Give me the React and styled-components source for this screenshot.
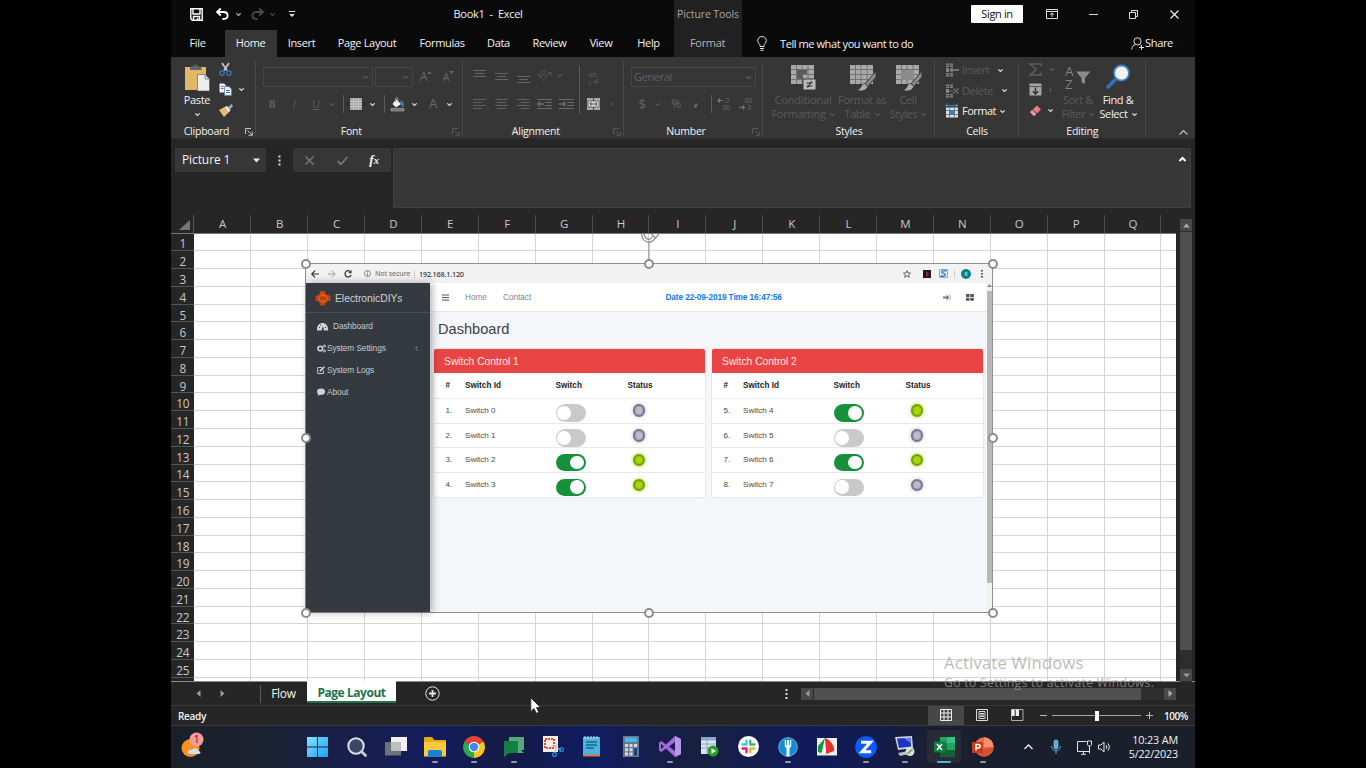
import React from 'react';
import styled, { createGlobalStyle, css } from 'styled-components';

const Global = createGlobalStyle`
  * { box-sizing: border-box; }
  html, body { margin: 0; background: #000; overflow: hidden; }
  svg { display: block; flex: none; overflow: visible; }
`;

const ui = '"Open Sans", "Noto Sans", sans-serif';
const web = '"Liberation Sans", Arial, sans-serif';
const DIM = '#5a5a5a';

const Screen = styled.div`
  width: 1366px; height: 768px; background: #000;
  display: flex; justify-content: center; overflow: hidden;
`;
const Desktop = styled.div`
  position: relative; width: 1024px; height: 768px;
  display: flex; flex-direction: column; background: #262626;
  font-family: ${ui}; font-size: 11px; color: #f2f2f2;
`;
const Slot = styled.div`
  flex: none; width: ${p => p.$w}px; display: flex; align-items: center; justify-content: ${p => p.$j || 'center'};
  white-space: nowrap;
`;
const Spacer = styled.div`flex: ${p => (p.$w ? 'none' : 1)}; width: ${p => (p.$w ? p.$w + 'px' : 'auto')};`;
const Text = styled.span`
  white-space: nowrap; font-size: ${p => p.$s || 11}px; letter-spacing: ${p => p.$ls ?? -0.36}px;
  color: ${p => p.$c || '#f2f2f2'}; font-weight: ${p => p.$b || 500}; line-height: 14px;
  ${p => p.$i && css`font-style: italic;`}
  ${p => p.$u && css`text-decoration: underline;`}
`;

/* title bar and ribbon tabs */
const TitleBar = styled.div`height: 30px; flex: none; display: flex; background: #0a0a0a; padding-bottom: 2px;`;
const TabBar = styled.div`height: 27px; flex: none; display: flex; background: #0a0a0a;`;
const ContextTitle = styled(Slot)`background: #212121; margin-bottom: -2px; padding-bottom: 2px;`;
const RibbonTab = styled(Slot)`background: ${p => p.$bg || 'transparent'}; padding: 0 1px 1px 0;`;
const TellMe = styled.span`align-self: center; white-space: nowrap; font-size: 11px; letter-spacing: -0.42px; font-weight: 500; padding-bottom: 1px;`;
const SignIn = styled.div`
  width: 52px; height: 18px; margin-top: 5px; background: #fff; border-radius: 1px;
  display: flex; align-items: center; justify-content: center;
`;

/* ribbon */
const Ribbon = styled.div`
  height: 82px; flex: none; display: flex; background: #363636; border-bottom: 1px solid #2c2c2c;
`;
const Group = styled.section`
  width: ${p => p.$w}px; flex: none; display: flex; flex-direction: column; position: relative;
  &::after { content: ''; width: 1px; height: 75px; position: absolute; right: 0; top: 4px; background: #4a4a4a; }
`;
const GroupBody = styled.div`height: 67px; display: flex;`;
const GroupLabel = styled.div`height: 15px; display: flex; align-items: center; justify-content: center; padding: 1px ${p => p.$pr || 0}px 0 0;`;
const Launcher = styled.div`position: absolute; right: 3px; bottom: 2px;`;
const Stack = styled.div`width: ${p => p.$w}px; flex: none; display: flex; flex-direction: column; padding-top: ${p => p.$pt || 0}px;`;
const Line = styled.div`height: ${p => p.$h || 20}px; flex: none; display: flex; align-items: center; padding-left: ${p => p.$pl || 0}px; margin-top: ${p => p.$mt || 0}px;`;
const Combo = styled.div`
  width: ${p => p.$w}px; height: 20px; border: 1px solid #454545; display: flex; align-items: center;
  justify-content: space-between; padding: 0 4px 0 2px; margin-right: 2px;
`;
const VRule = styled.div`width: 1px; height: ${p => p.$h || 18}px; background: #5c5c5c;`;
const BigButton = styled.div`
  width: ${p => p.$w}px; flex: none; padding-top: 7px; display: flex; flex-direction: column; align-items: center;
`;
const BigIcon = styled.div`height: 29px;`;
const BigText = styled.div`height: 14px; display: flex; align-items: center; justify-content: center; gap: 4px;`;
const Comma = styled.span`color: #666; font-size: 18px; line-height: 10px; margin-top: -10px; font-weight: 700;`;
const Raised = styled.span`margin-bottom: 9px;`;
const Collapse = styled.div`width: 24px; display: flex; align-items: flex-end; justify-content: center; padding-bottom: 3px;`;

/* formula bar */
const FormulaBar = styled.div`height: 76px; flex: none; display: flex; padding: 9px 4px 0; background: #262626;`;
const NameBox = styled.div`width: 91px; height: 24px; background: #363636; display: flex; align-items: center; justify-content: space-between; padding: 0 6px 0 7px;`;
const DotsCell = styled.div`width: 27px; height: 24px; display: flex; align-items: center; justify-content: center;`;
const FxBox = styled.div`width: 98px; height: 24px; background: #363636; display: flex; align-items: center; margin-right: 2px;`;
const FxText = styled.span`font: italic 700 13.5px "Liberation Serif", serif; small { font-size: 10.5px; }`;
const FormulaInput = styled.div`flex: 1; height: 60px; background: #373737; border: 1px solid #404040; display: flex; justify-content: flex-end; padding: 7px 4px;`;

/* worksheet */
const SheetArea = styled.div`height: 467px; flex: none; display: flex; position: relative; background: #262626; border-bottom: 1px solid #8a8a8a;`;
const Sheet = styled.div`width: 1005px; height: 466px; overflow: hidden; position: relative;`;
const HeaderRow = styled.div`display: flex; height: 18.6px; width: 1040px; border-bottom: 1px solid #777;`;
const Corner = styled.div`width: 23.3px; flex: none; display: flex; align-items: flex-end; justify-content: flex-end; padding: 0 3px 3px 0; border-right: 1px solid #555;`;
const ColHead = styled.div`
  width: 56.9px; flex: none; display: flex; align-items: center; justify-content: center; color: #c9c9c9;
  font-size: 11.5px; border-right: 1px solid #4c4c4c; padding: 1px 0 0 1px; line-height: 14px;
`;
const Row = styled.div`display: flex; height: 17.78px; width: 1040px;`;
const RowHead = styled.div`
  width: 23.3px; flex: none; background: #262626; color: #c9c9c9; font-size: 11.8px; letter-spacing: -0.3px;
  display: flex; align-items: center; justify-content: center; padding-top: 3px; border-bottom: 1px solid #555; line-height: 14px;
`;
const Cell = styled.div`width: 56.9px; flex: none; background: #fff; border-right: 1px solid #d4d4d4; border-bottom: 1px solid #d4d4d4;`;
const VScroll = styled.div`width: 12px; margin: 4px 3px 0 4px; height: 463px; display: flex; flex-direction: column; background: #2d2d2d;`;
const ScrollButton = styled.div`width: 12px; height: 12px; flex: none; background: #484848; display: flex; align-items: center; justify-content: center;`;
const VThumb = styled.div`height: 418px; margin: 1px 0 19px; background: #4f4f4f;`;

/* picture placed over the cells */
const Picture = styled.div`
  position: absolute; left: 134px; top: 48px; width: 688px; height: 350px; border: 1px solid #8e8e8e;
  background: #f4f6f9; font-family: ${web}; display: flex; flex-direction: column; color: #444;
`;
const Knob = styled.i`
  position: absolute; left: ${p => p.$x}px; top: ${p => p.$y}px; width: 10px; height: 10px; margin: -5px;
  border-radius: 50%; background: #fff; border: 2px solid #8c8c8c; z-index: 2;
`;
const RotateHandle = styled.div`position: absolute; left: 468px; top: 19px;`;
const BrowserBar = styled.div`height: 19px; flex: none; display: flex; align-items: center; background: #f2f2f2; color: #555; font-family: "Noto Sans", sans-serif;`;
const AppBody = styled.div`flex: 1; display: flex; min-height: 0;`;
const SideBar = styled.nav`width: 124px; flex: none; background: #343a40; color: #c6cad0; box-shadow: 2px 0 8px rgba(0,0,0,.32); z-index: 1;`;
const Brand = styled.div`height: 30px; display: flex; align-items: center; border-bottom: 1px solid #444b52; padding: 1px 0 0 9px; gap: 4px;`;
const BrandText = styled.span`font-size: 10.3px; color: #ced2d7;`;
const NavItem = styled.div`height: 21.9px; display: flex; align-items: center; padding: 0 12px 0 11px; font-size: 8.3px; letter-spacing: -0.08px;`;
const Main = styled.main`width: 557px; flex: none; background: #f4f6f9;`;
const TopNav = styled.header`height: 29px; background: #fff; border-bottom: 1px solid #e3e6ea; display: flex; align-items: center; font-size: 8.2px; color: #858585;`;
const DateText = styled.b`color: #1479ef; font-size: 8.3px; letter-spacing: -0.12px; white-space: nowrap;`;
const Heading = styled.h1`margin: 0; height: 37px; padding: 8px 0 0 8px; font-size: 14.6px; font-weight: 400; line-height: 18px; color: #3b4046;`;
const Cards = styled.div`display: flex; gap: 7.5px; padding-left: 4px;`;
const Card = styled.article`width: 270.5px; background: #fff; border-radius: 2px; overflow: hidden; box-shadow: 0 0 1.5px rgba(0,0,0,.3);`;
const CardTitle = styled.div`height: 24px; background: #e94444; color: #fbe8e8; font-size: 10.4px; letter-spacing: -0.05px; padding-left: 10px; display: flex; align-items: center;`;
const TableRow = styled.div`
  height: 24.8px; display: grid; grid-template-columns: 19.5px 90.5px 72px 1fr; padding-left: 11.5px;
  font-size: ${p => (p.$head ? 8.2 : 8.1)}px;
  border-top: 1px solid ${p => (p.$head ? 'transparent' : '#e6e8ea')}; color: ${p => (p.$head ? '#222' : '#4a4a4a')};
  font-weight: ${p => (p.$head ? 700 : 400)}; line-height: 23px;
`;
const Toggle = styled.span`
  display: flex; width: 30.5px; height: 17.5px; margin-top: 5.5px; border-radius: 9px; padding: 1.8px;
  background: ${p => (p.$on ? '#14913a' : '#c9c9c9')}; justify-content: ${p => (p.$on ? 'flex-end' : 'flex-start')};
  &::after { content: ''; width: 13.8px; height: 13.8px; border-radius: 50%; background: #fff; }
`;
const Led = styled.span`
  display: block; width: 12.5px; height: 12.5px; margin: 5.5px 0 0 5px; border-radius: 50%;
  border: 2px solid ${p => (p.$on ? '#7b9d0c' : '#77778f')}; background: ${p => (p.$on ? '#a6d900' : '#bdbccb')};
  box-shadow: 0 0 4px ${p => (p.$on ? '#a2dc28' : '#b9b9cc')}, inset 0 0 1.5px ${p => (p.$on ? '#7b9d0c' : '#77778f')};
`;
const WebScroll = styled.div`width: 5px; background: #f0f0f0; display: flex; flex-direction: column; align-items: center;`;
const WebThumb = styled.div`width: 5px; height: 292px; margin-top: 3px; background: #b8b8b8;`;
const Thin = styled.i`width: 1px; height: 8px; background: #ccc;`;
const Avatar = styled.span`width: 10px; height: 10px; border-radius: 50%; background: #0b8080; color: #cfe; font-size: 5px; line-height: 10px; text-align: center;`;

/* sheet tabs and status bar */
const SheetBar = styled.div`height: 24px; flex: none; display: flex; align-items: center; border-bottom: 1px solid #3a3a3a;`;
const ActiveSheet = styled.div`width: 89px; height: 22px; align-self: flex-start; margin-top: -1px; padding-top: 3px; z-index: 1; background: #fff; border-bottom: 2px solid #217346; display: flex; align-items: center; justify-content: center;`;
const HScroll = styled.div`width: 375px; height: 12px; display: flex; background: #2e2e2e; justify-content: space-between;`;
const HThumb = styled.div`width: 327px; margin: 0 auto 0 1px; background: #4f4f4f;`;
const StatusBar = styled.div`height: 20px; flex: none; display: flex; align-items: center; border-bottom: 1px solid #3a3a3a;`;
const ViewButton = styled(Slot)`height: 19px; padding-bottom: 1px; background: ${p => (p.$on ? '#474747' : 'transparent')};`;
const ZoomTrack = styled.div`width: 89px; height: 10px; display: flex; align-items: center; justify-content: center; background: linear-gradient(#a5a5a5, #a5a5a5) center / 100% 1px no-repeat;`;
const ZoomThumb = styled.div`width: 4px; height: 10px; background: #fff;`;

/* taskbar */
const TaskBar = styled.footer`
  height: 42px; flex: none; display: flex; align-items: stretch;
  background: linear-gradient(90deg, #1a202b 0, #1a212f 90px, #1a2044 150px, #121c5c 260px, #151b45 330px, #101c60 420px, #17203f 520px, #101b5c 640px, #141c49 715px, #1a1f30 760px, #1a1f2b 100%);
`;
const Task = styled.div`
  width: 39.15px; flex: none; display: flex; flex-direction: column; align-items: center; padding-top: 4px;
`;
const TaskTile = styled.div`width: 34px; height: 33px; border-radius: 3px; display: flex; align-items: center; justify-content: center; background: ${p => (p.$on ? '#282a35' : 'transparent')};`;
const Dot = styled.i`width: ${p => (p.$on ? 14 : 6)}px; height: 2px; margin-top: -2px; border-radius: 1px; background: ${p => (p.$on ? '#4db2ec' : '#9297ac')};`;
const Clock = styled.div`width: 72px; display: flex; flex-direction: column; align-items: flex-end; padding: 7px 0 0;`;
const Watermark = styled.div`position: absolute; left: 773px; top: 653px; z-index: 3; display: flex; flex-direction: column; color: rgba(160,160,160,.72); white-space: nowrap;`;
const WatermarkTitle = styled.div`font-size: 16.6px; line-height: 19px; letter-spacing: 0.22px;`;
const WatermarkNote = styled.div`font-size: 12.2px; line-height: 14px; margin-top: 4px; letter-spacing: 0.3px;`;
const Pointer = styled.div`position: absolute; left: 359px; top: 697px; z-index: 4;`;

const Ico = ({ w = 16, h = w, s = 'none', f = 'none', sw = 1, children }) => (
  <svg width={w} height={h} viewBox={`0 0 ${w} ${h}`} fill={f} stroke={s} strokeWidth={sw}>{children}</svg>
);
const Chev = ({ c = '#e0e0e0', w = 5 }) => <Ico w={w} h={3} s={c} sw={1.2}><path d={`M.3 .3 L${w / 2} 2.5 L${w - 0.3} .3`} /></Ico>;
const Tri = ({ d = 'down', c = '#eee', w = 7 }) => {
  const p = { down: 'M0 1.5H7L3.5 5.5Z', up: 'M0 5.5H7L3.5 1.5Z', left: 'M5.5 0V7L1.5 3.5Z', right: 'M1.5 0V7L5.5 3.5Z' }[d];
  return <svg width={w} height={w} viewBox="0 0 7 7" fill={c}><path d={p} /></svg>;
};
const Lines = ({ rows, w = 13, c = '#606060' }) => (
  <Ico w={w} h={11} s={c}>{rows.map(([a, b], i) => <path key={i} d={`M${a} ${0.5 + i * 3}H${b}`} />)}</Ico>
);
const LaunchIcon = ({ c }) => <Ico w={8} h={8} s={c}><path d="M.5 6V.5H6M2.5 2.5L7 7M7.3 3.5V7.3H3.5" /></Ico>;
const GroupFoot = ({ label, launch, pr }) => (
  <>
    <GroupLabel $pr={pr}><Text $ls={-0.22} $s={10.5}>{label}</Text></GroupLabel>
    {launch && <Launcher><LaunchIcon c={launch} /></Launcher>}
  </>
);

const tabs = [
  ['File', 54], ['Home', 52, '#363636'], ['Insert', 50], ['Page Layout', 81], ['Formulas', 69], ['Data', 44],
  ['Review', 58], ['View', 45], ['Help', 50], ['Format', 68, '#212121', '#b5b5b5'],
];

const Top = () => (
  <>
    <TitleBar>
      <Spacer $w={15} />
      <Slot $w={21}><Ico w={13} s="#fff" sw={1.4}><path d="M.8 .8H12.2V12.2H2.3L.8 10.8ZM3 1V6H10V1M3.5 12V8.5H9.5V12M7.5 10V12" /></Ico></Slot>
      <Slot $w={31}><Ico w={13} h={12} s="#fff" sw={1.8}><path d="M4.8 .5L1 4L4.8 7.5M1 4H7.5C13 4 13 11 7.5 11H6.5" /></Ico></Slot>
      <Slot $w={0}><Chev c="#bbb" /></Slot>
      <Spacer $w={5} />
      <Slot $w={29}><Ico w={13} h={12} s="#4b4b4b" sw={1.8}><path d="M8.2 .5L12 4L8.2 7.5M12 4H5.5C0 4 0 11 5.5 11H6.5" /></Ico></Slot>
      <Slot $w={0}><Chev c="#4b4b4b" /></Slot>
      <Slot $w={39}><Ico w={6} h={7} s="#ddd"><path d="M0 .5H6M1 3.5H5L3 5.5Z" fill="#ddd" /></Ico></Slot>
      <Spacer $w={177} />
      <Slot $w={0}><Text $ls={-0.3}>Book1&nbsp; -&nbsp; Excel</Text></Slot>
      <Spacer $w={186} />
      <ContextTitle $w={68}><Text $c="#a5a5a5" $s={10.5} $ls={-0.1}>Picture Tools</Text></ContextTitle>
      <Spacer />
      <SignIn><Text $c="#111">Sign in</Text></SignIn>
      <Slot $w={58}><Ico w={12} h={10} s="#ddd"><path d="M.5 .5H11.5V9.5H.5ZM.5 2.5H11.5M6 8V4.5M4 5.7L6 4L8 5.7" /></Ico></Slot>
      <Slot $w={25}><Ico w={9} h={3} s="#ddd"><path d="M0 1.5H9" /></Ico></Slot>
      <Slot $w={55}><Ico w={9} h={9} s="#ddd"><path d="M.5 2.5H6.5V8.5H.5ZM2.5 2.5V.5H8.5V6.5H6.5" /></Ico></Slot>
      <Slot $w={27}><Ico w={9} h={9} s="#eee" sw={1.2}><path d="M.5 .5L8.5 8.5M8.5 .5L.5 8.5" /></Ico></Slot>
      <Spacer $w={7} />
    </TitleBar>
    <TabBar>
      {tabs.map(([t, w, bg, c]) => <RibbonTab key={t} $w={w} $bg={bg}><Text $c={c} $ls={-0.34}>{t}</Text></RibbonTab>)}
      <Spacer $w={10} />
      <Slot $w={20}><Ico w={10} h={15} s="#ddd"><path d="M3 10.5V9.5C3 8 .7 7 .7 4.7A4.3 4.2 0 0 1 9.3 4.7C9.3 7 7 8 7 9.5V10.5ZM3 12.5H7M3.5 14.3H6.5" /></Ico></Slot>
      <Spacer $w={8} />
      <TellMe>Tell me what you want to do</TellMe>
      <Spacer />
      <Slot $w={14}><Ico w={14} h={13} s="#ddd"><circle cx="6.5" cy="4.3" r="3.6" /><path d="M.7 12.5C.9 9.3 2.5 8.2 4.5 7.7M8.4 7.5L9.5 8.5M10.5 8V13M8 10.5H13" /></Ico></Slot>
      <RibbonTab $w={29}><Text>Share</Text></RibbonTab>
      <Spacer $w={21} />
    </TabBar>
  </>
);

const TableIcon = ({ kind }) => (
  <Ico w={27} h={28}>
    <path d="M1 1H24V20H1Z" fill="#a9a9a9" />
    <path d="M1 5.5H24M1 10.5H24M1 15.5H24M6.5 1V20M12 1V20M18 1V20" stroke="#666" strokeWidth=".8" />
    {kind === 'cond' && <><path d="M7 6H17V10H13V15H7Z" fill="#5b5b5b" /><path d="M13 15H26V26H13Z" fill="#bcbcbc" stroke="#363636" /><path d="M16.5 19H22.5M16.5 22H22.5M21.5 17L17.5 24" stroke="#222" /></>}
    {kind === 'cell' && <path d="M6 6H19V16H6Z" fill="#8b8b8b" />}
    {kind !== 'cond' && <><path d="M27 7L16 20L19 22.5L27 13Z" fill="#8b8b8b" stroke="#363636" /><path d="M15 19L19 22.5C17 27 12 27.5 8 26.5C12 25 12 21 15 19Z" fill="#aaa" stroke="#363636" strokeWidth=".7" /></>}
  </Ico>
);
const CellIcon = ({ kind }) => (
  <Ico w={14} h={14}>
    {kind === 'fmt'
      ? <><path d="M1 3.5H13V13.5H1Z" fill="#ddd" /><path d="M1 6.5H13M1 10.5H13M4.5 4V13M9.5 4V13" stroke="#555" strokeWidth=".7" /><path d="M4 6H9.5V10.5H4Z" fill="#2f7fd0" /><path d="M.5 1.5H13M2.5 0L.7 1.5L2.5 3M11 0L13 1.5L11 3" stroke="#3a86cf" /></>
      : <><path d="M1 .5H8V4H1ZM1 10H8V13.5H1ZM1 5H4V9H1Z" fill="#858585" /><path d="M4.5 0V4M4.5 10V14M1 2.3H8M1 11.7H8" stroke="#363636" strokeWidth=".7" />
        {kind === 'ins' ? <path d="M5 7H14M7.5 5L5.3 7L7.5 9" stroke="#858585" strokeWidth="1.4" /> : <path d="M8.5 4.5L13.5 9.5M13.5 4.5L8.5 9.5M4 7H8" stroke="#707070" strokeWidth="1.2" />}</>}
  </Ico>
);
const DecimalIcon = ({ dec }) => (
  <Ico w={14} h={14} f="#6d6d6d">
    <text x={dec ? 4 : 7} y="5.5" fontSize="6.5" stroke="none" fontFamily="Open Sans">{dec ? '.00' : '.0'}</text>
    <text x={dec ? 7 : 4} y="13" fontSize="6.5" stroke="none" fontFamily="Open Sans">{dec ? '.0' : '.00'}</text>
    <path d={dec ? 'M0 10.5H5M3.5 8.5L5.5 10.5L3.5 12.5' : 'M1 3.5H6M3 1.5L1 3.5L3 5.5'} stroke="#777" fill="none" strokeWidth="1.2" />
  </Ico>
);

const RibbonPanel = () => (
  <Ribbon>
    <Group $w={85}>
      <GroupBody>
        <Spacer $w={10} />
        <BigButton $w={32}>
          <BigIcon><Ico w={26} h={28}><path d="M1 3H22V26H1Z" fill="#e2b768" /><path d="M6 6V2.5H9C9 .3 14 .3 14 2.5H17.5V6Z" fill="#626262" /><path d="M13.5 10.5H21L25.5 15V27H13.5Z" fill="#eee" stroke="#555" strokeWidth=".6" /><path d="M21 10.5V15H25.5" stroke="#888" /></Ico></BigIcon>
          <BigText><Text>Paste</Text></BigText><BigText><Chev /></BigText>
        </BigButton>
        <Stack $w={40} $pt={2}>
          <Line $pl={6}><Ico w={13} h={14}><path d="M3 1L8 8.5M10 1L5 8.5" stroke="#c8c8c8" strokeWidth="1.7" /><circle cx="3" cy="11" r="2.2" stroke="#3a78ba" strokeWidth="1.3" /><circle cx="10" cy="11" r="2.2" stroke="#3a78ba" strokeWidth="1.3" /></Ico></Line>
          <Line $pl={6} $h={21}><Ico w={13} h={13}><path d="M.5 .5H5L7 2.5V9.5H.5Z" fill="#eee" /><path d="M5.5 3.5H10L12.5 6V12.5H5.5Z" fill="#eee" stroke="#4a7aaf" strokeWidth=".7" /><path d="M2 3.5H4.5M2 5.5H4.5M7 7.5H11M7 9.5H11" stroke="#3a78ba" /></Ico><Spacer $w={7} /><Chev /></Line>
          <Line $pl={6}><Ico w={14} h={13}><path d="M0 6L5.5 3L10 8L5 13Z" fill="#e6b978" /><path d="M5.5 3L8 2L11.5 6L10 8.5Z" fill="#eee" /><path d="M8.5 3.5L12.5 0L14 2L11 5.5Z" fill="#aaa" /></Ico></Line>
        </Stack>
      </GroupBody>
      <GroupFoot label="Clipboard" launch="#c4c4c4" pr={14} />
    </Group>
    <Group $w={206.5}>
      <GroupBody>
        <Stack $w={206}>
          <Line $mt={10} $pl={7}>
            <Combo $w={110}><span /><Chev c={DIM} /></Combo><Combo $w={38}><span /><Chev c={DIM} /></Combo>
            <Slot $w={22}><Text $s={12.5} $c="#686868">A</Text><Raised><Tri d="up" c="#686868" w={5} /></Raised></Slot>
            <Slot $w={23}><Text $s={10.5} $c="#686868">A</Text><Raised><Tri c="#686868" w={5} /></Raised></Slot>
          </Line>
          <Line $mt={7} $pl={5}>
            <Slot $w={22}><Text $c={DIM} $b={700}>B</Text></Slot><Slot $w={22}><Text $c={DIM} $i>I</Text></Slot>
            <Slot $w={22}><Text $c={DIM} $u>U</Text></Slot><Slot $w={10}><Chev c={DIM} /></Slot>
            <Slot $w={12}><VRule /></Slot>
            <Slot $w={14}><Ico w={12} h={12}><path d="M0 0H12V12H0Z" fill="#a8a8a8" /><path d="M0 3.5H12M0 8.5H12M3.5 0V12M8.5 0V12M6 0V12M0 6H12" stroke="#ccc" strokeWidth=".7" /></Ico></Slot>
            <Slot $w={19}><Chev /></Slot><Slot $w={4}><VRule /></Slot>
            <Slot $w={22}><Ico w={15} h={15}><path d="M6 2L11 7L6 10.5L2.5 7Z" fill="#f2f2f2" /><path d="M5.5 5V1.5C5.5 0 8 0 8 1.5V4" stroke="#999" /><path d="M10.5 4C14 4.5 14 8 12.5 10C11.5 8.5 12 6.5 10.5 4Z" fill="#3a78c0" stroke="#3a78c0" /><path d="M1 11.5H14V14H1Z" fill="#777" stroke="#999" strokeWidth=".8" /></Ico></Slot>
            <Slot $w={12}><Chev /></Slot><Slot $w={26}><Text $c="#6b6b6b" $s={12.5}>A</Text></Slot><Slot $w={6}><Chev /></Slot>
          </Line>
        </Stack>
      </GroupBody>
      <GroupFoot label="Font" launch="#585858" pr={16} />
    </Group>
    <Group $w={161.5}>
      <GroupBody>
        <Stack $w={111}>
          <Line $mt={8} $pl={6}>
            <Slot $w={22}><Ico w={13} h={12} s="#666"><path d="M0 1.5H13M2 4.5H11M0 7.5H13" /></Ico></Slot>
            <Slot $w={22}><Ico w={13} h={12} s="#666"><path d="M0 4.5H13M2 7.5H11M0 10.5H13" /></Ico></Slot>
            <Slot $w={21}><Ico w={13} h={12} s="#666"><path d="M0 7.5H13M2 10.5H11M0 13.5H13" /></Ico></Slot>
            <Slot $w={24}><Ico w={15} h={14}><text x="0" y="9" fill={DIM} fontSize="8.5" transform="rotate(-40 4 8)" fontFamily="Open Sans">ab</text><path d="M4 13L13 4.5M13 4.5H10M13 4.5V8" stroke={DIM} /></Ico></Slot>
            <Slot $w={4}><Chev c={DIM} /></Slot>
          </Line>
          <Line $mt={9} $pl={6}>
            <Slot $w={22}><Lines rows={[[0, 13], [0, 9], [0, 13], [0, 9]]} /></Slot>
            <Slot $w={22}><Lines rows={[[0, 13], [2, 11], [0, 13], [2, 11]]} /></Slot>
            <Slot $w={21}><Lines rows={[[0, 13], [4, 13], [0, 13], [4, 13]]} /></Slot>
            <Slot $w={22}><Ico w={15} h={11} s="#6d6d6d"><path d="M0 .5H15M8 3.5H15M8 6.5H15M0 9.5H15" /><path d="M7 5H1M3 2.7L.8 5L3 7.3" strokeWidth="1.5" /></Ico></Slot>
            <Slot $w={21}><Ico w={15} h={11} s="#6d6d6d"><path d="M0 .5H15M8 3.5H15M8 6.5H15M0 9.5H15" /><path d="M0 5H6M4 2.7L6.2 5L4 7.3" strokeWidth="1.5" /></Ico></Slot>
          </Line>
        </Stack>
        <Slot $w={11}><VRule $h={48} /></Slot>
        <Stack $w={38}>
          <Line $mt={10}><Slot $w={17}><Ico w={11} h={13}><text x="0" y="6" fill={DIM} fontSize="7.5" fontFamily="Open Sans">ab</text><text x="0" y="14" fill={DIM} fontSize="7.5" fontFamily="Open Sans">c</text><path d="M9.5 8V11H6M7.5 9L5.5 11L7.5 13" stroke={DIM} /></Ico></Slot></Line>
          <Line $mt={7}><Slot $w={17}><Ico w={13} h={12}><path d="M0 0H13V12H0Z" fill="#aaa" /><path d="M1 3H12V9H1Z" fill="#ddd" stroke="#555" strokeWidth=".8" /><path d="M3 6H10M4.5 4.3L2.8 6L4.5 7.7M8.5 4.3L10.2 6L8.5 7.7M6.5 0V3M6.5 9V12" stroke="#333" strokeWidth=".9" /></Ico></Slot><Slot $w={18}><Tri d="left" c={DIM} w={4} /></Slot></Line>
        </Stack>
      </GroupBody>
      <GroupFoot label="Alignment" launch="#585858" pr={15} />
    </Group>
    <Group $w={139}>
      <GroupBody>
        <Stack $w={138}>
          <Line $mt={10} $pl={7}><Combo $w={125}><Text $c="#626262" $ls={-0.35}>General</Text><Chev c="#666" /></Combo></Line>
          <Line $mt={7} $pl={7}>
            <Slot $w={22}><Text $s={13} $c="#666">$</Text></Slot><Slot $w={8}><Chev c={DIM} /></Slot><Slot $w={30}><Text $s={12} $c="#666">%</Text></Slot>
            <Slot $w={10}><Comma>,</Comma></Slot><Slot $w={20}><VRule /></Slot>
            <Slot $w={6}><DecimalIcon /></Slot><Slot $w={38}><DecimalIcon dec /></Slot>
          </Line>
        </Stack>
      </GroupBody>
      <GroupFoot label="Number" launch="#585858" pr={15} />
    </Group>
    <Group $w={172}>
      <GroupBody>
        <Spacer $w={4} />
        <BigButton $w={72}><BigIcon><TableIcon kind="cond" /></BigIcon><BigText><Text $c={DIM} $ls={-0.15}>Conditional</Text></BigText><BigText><Text $c={DIM} $ls={-0.22}>Formatting</Text><Chev c={DIM} /></BigText></BigButton>
        <BigButton $w={46}><BigIcon><TableIcon /></BigIcon><BigText><Text $c={DIM}>Format as</Text></BigText><BigText><Text $c={DIM}>Table</Text><Chev c={DIM} /></BigText></BigButton>
        <BigButton $w={46}><BigIcon><TableIcon kind="cell" /></BigIcon><BigText><Text $c={DIM}>Cell</Text></BigText><BigText><Text $c={DIM}>Styles</Text><Chev c={DIM} /></BigText></BigButton>
      </GroupBody>
      <GroupFoot label="Styles" />
    </Group>
    <Group $w={84}>
      <GroupBody>
        <Stack $w={83} $pt={3}>
          <Line $pl={10}><CellIcon kind="ins" /><Spacer $w={3} /><Slot $w={32} $j="flex-start"><Text $c={DIM} $ls={-0.4}>Insert</Text></Slot><Spacer $w={4} /><Chev /></Line>
          <Line $pl={10} $h={21}><CellIcon /><Spacer $w={3} /><Slot $w={36} $j="flex-start"><Text $c={DIM}>Delete</Text></Slot><Spacer $w={4} /><Chev /></Line>
          <Line $pl={10}><CellIcon kind="fmt" /><Spacer $w={3} /><Slot $w={35} $j="flex-start"><Text $ls={-0.5}>Format</Text></Slot><Spacer $w={3} /><Chev /></Line>
        </Stack>
      </GroupBody>
      <GroupFoot label="Cells" />
    </Group>
    <Group $w={126.5}>
      <GroupBody>
        <Stack $w={38} $pt={2}>
          <Line $pl={10}><Ico w={13} h={13} s="#5c5c5c" sw={1.7}><path d="M12 3V1H1.5L7 6.5L1.5 12H12V10" /></Ico><Spacer $w={8} /><Chev c={DIM} /></Line>
          <Line $pl={10} $h={21}><Ico w={13} h={13}><path d="M.5 .5H12.5V12.5H.5Z" fill="#a6a6a6" /><path d="M.5 3.5H12.5" stroke="#555" /><path d="M6.5 4.5V11M3.8 8.3L6.5 11L9.2 8.3" stroke="#333" strokeWidth="1.5" /></Ico><Spacer $w={6} /><Tri d="left" c={DIM} w={4} /></Line>
          <Line $pl={10}><Ico w={13} h={13}><path d="M1 8L8 1.5L12 5.5L5 12Z" fill="#e67f8d" /><path d="M1 8L3.5 5.7L7.5 9.7L5 12Z" fill="#f19aa6" /><path d="M3.2 5.4L7.8 10" stroke="#333" /></Ico><Spacer $w={6} /><Chev /></Line>
        </Stack>
        <BigButton $w={42}><BigIcon><Ico w={27} h={28}><text x="0" y="12" fontSize="13.5" fill="#808080" fontFamily="Open Sans">A</text><text x="0" y="25" fontSize="13.5" fill="#808080" fontFamily="Open Sans">Z</text><path d="M11 7.5H25.5L20 14V20L16.5 18V14Z" fill="#8a8a8a" /></Ico></BigIcon><BigText><Text $c={DIM}>Sort &amp;</Text></BigText><BigText><Text $c={DIM}>Filter</Text><Chev c={DIM} /></BigText></BigButton>
        <BigButton $w={38}><BigIcon><Ico w={25} h={26}><path d="M2 23L9 16" stroke="#2f74c4" strokeWidth="3.5" strokeLinecap="round" /><circle cx="15.5" cy="9" r="7.5" fill="#f2f2f2" stroke="#3f83cd" strokeWidth="1.8" /></Ico></BigIcon><BigText><Text>Find &amp;</Text></BigText><BigText><Text>Select</Text><Chev /></BigText></BigButton>
      </GroupBody>
      <GroupFoot label="Editing" />
    </Group>
    <Spacer />
    <Collapse><Ico w={9} h={5} s="#bbb" sw={1.2}><path d="M.5 4.5L4.5 .7L8.5 4.5" /></Ico></Collapse>
  </Ribbon>
);

const Formula = () => (
  <FormulaBar>
    <NameBox><Text $s={12} $ls={-0.1}>Picture 1</Text><Tri w={7} /></NameBox>
    <DotsCell><Ico w={3} h={11} f="#ddd"><path d="M.5 .5h2v2h-2zM.5 4.5h2v2h-2zM.5 8.5h2v2h-2z" /></Ico></DotsCell>
    <FxBox>
      <Slot $w={33}><Ico w={9} h={9} s="#777" sw={1.5}><path d="M.5 .5L8.5 8.5M8.5 .5L.5 8.5" /></Ico></Slot>
      <Slot $w={32}><Ico w={11} h={9} s="#777" sw={1.7}><path d="M.5 5L4 8.2L10.5 .7" /></Ico></Slot>
      <Slot $w={32}><FxText>f<small>x</small></FxText></Slot>
    </FxBox>
    <FormulaInput><Ico w={7} h={6} s="#fff" sw={2}><path d="M.5 5L3.5 2L6.5 5" /></Ico></FormulaInput>
  </FormulaBar>
);

const cols = 'ABCDEFGHIJKLMNOPQ'.split('').concat('');
const rowNums = Array.from({ length: 26 }, (_, i) => i + 1);
const knobs = [[-0.5, -0.3], [343, -0.3], [687, -0.3], [-0.5, 173.5], [687, 173.5], [-0.5, 348.5], [343, 348.5], [687, 348.5]];

const SwitchCard = ({ title, rows }) => (
  <Card>
    <CardTitle>{title}</CardTitle>
    <TableRow $head><span>#</span><span>Switch Id</span><span>Switch</span><span>Status</span></TableRow>
    {rows.map(([n, on]) => (
      <TableRow key={n}><span>{n + 1}.</span><span>Switch {n}</span><span><Toggle $on={on} /></span><span><Led $on={on} /></span></TableRow>
    ))}
  </Card>
);

const EmbeddedPicture = () => (
  <Picture>
    <BrowserBar>
      <Slot $w={18}><Ico w={8} h={8} s="#333" sw={1.2}><path d="M8 4H1M4 .7L.8 4L4 7.3" /></Ico></Slot>
      <Slot $w={15}><Ico w={8} h={8} s="#999"><path d="M0 4H7M4 .7L7.2 4L4 7.3" /></Ico></Slot>
      <Slot $w={17}><Ico w={8} h={8} s="#333" sw={1.3}><path d="M6.8 1.8A3.2 3.2 0 1 0 7.2 5" /><path d="M7.5 0V3.3H4.2Z" fill="#333" stroke="none" /></Ico></Slot>
      <Spacer $w={8} />
      <Ico w={7} h={7} s="#666" sw={0.8}><circle cx="3.5" cy="3.5" r="3" /><path d="M3.5 3V5.5M3.5 1.5V2.3" /></Ico>
      <Spacer $w={4} />
      <Slot $w={35} $j="flex-start"><Text $s={7} $ls={-0.1} $c="#777">Not secure</Text></Slot>
      <Slot $w={9}><Thin /></Slot>
      <Text $s={7.2} $ls={-0.17} $c="#333">192.168.1.120</Text>
      <Spacer />
      <Slot $w={12}><Ico w={8} h={8} s="#555" sw={0.9}><path d="M4 .7L5 3H7.5L5.6 4.7L6.3 7.3L4 5.8L1.7 7.3L2.4 4.7L.5 3H3Z" /></Ico></Slot>
      <Spacer $w={10} /><Ico w={8} h={8}><path d="M0 0H8V8H0Z" fill="#20181f" /><path d="M3 2H5.5V6.5H3Z" fill="#8b2530" /></Ico>
      <Spacer $w={8} /><Ico w={9} h={9}><path d="M.5 .5H8.5V8.5H.5Z" fill="#e4edf5" stroke="#6d9cc4" strokeWidth=".8" /><path d="M7.5 2C3 1 1 3.5 4.5 4.3C8 5.5 6 8 1.5 7" stroke="#3b78b0" strokeWidth="1.3" /></Ico>
      <Slot $w={13}><Thin /></Slot>
      <Slot $w={10}><Avatar>R</Avatar></Slot>
      <Slot $w={21}><Ico w={2} h={8} f="#444"><path d="M0 0h1.8v1.6h-1.8zM0 3h1.8v1.6h-1.8zM0 6h1.8v1.6h-1.8z" /></Ico></Slot>
    </BrowserBar>
    <AppBody>
      <SideBar>
        <Brand><Ico w={16} h={16}><path d="M5 1H10V3L13 5.5H15.5V11H13L10 13.5V15.5H5V13.5L3 11H.5V5.5H3L5 3Z" fill="#b8481a" /><circle cx="8" cy="8.2" r="4.6" fill="#e8550f" /><path d="M6 6.5V10M8 6.5V10M10 6.5V10" stroke="#7d2f10" /></Ico><BrandText>ElectronicDIYs</BrandText></Brand>
        <Line $h={2.4} />
        <NavItem><Ico w={11} h={9} f="#cfd3d8"><path d="M0 8.5C-.5 3.5 2.5 1 5.5 1S11.5 3.5 11 8.5H7L6 4L4.5 8.5Z" /><path d="M2 5.5h1M3 3h1M8 5.5h1" stroke="#343a40" /></Ico><Spacer $w={5} />Dashboard</NavItem>
        <NavItem><Ico w={9} h={9}><circle cx="3.3" cy="4.5" r="2.3" stroke="#cfd3d8" strokeWidth="1.6" /><circle cx="7.5" cy="2" r="1" stroke="#cfd3d8" /><circle cx="7.5" cy="7" r="1" stroke="#cfd3d8" /></Ico><Spacer $w={1} />System Settings<Spacer /><Ico w={3} h={5} s="#aaa" sw={0.8}><path d="M2.5 .5L.5 2.5L2.5 4.5" /></Ico></NavItem>
        <NavItem><Ico w={8} h={8} s="#cfd3d8" sw={0.9}><path d="M5 1.5H.7V7.5H6.5V4.5M3 5.2L7.3 .8" /><path d="M3 5.2L7.3 .8" strokeWidth="1.7" /></Ico><Spacer $w={2} />System Logs</NavItem>
        <NavItem><Ico w={8} h={8} f="#cfd3d8"><ellipse cx="4" cy="3.7" rx="4" ry="3.1" /><path d="M1.5 5.5L.7 7.8L4 6.5Z" /></Ico><Spacer $w={2} />About</NavItem>
      </SideBar>
      <Main>
        <TopNav>
          <Spacer $w={12} /><Ico w={7} h={7} s="#555" sw={1.1}><path d="M0 1H7M0 3.5H7M0 6H7" /></Ico>
          <Spacer $w={16} /><Slot $w={38} $j="flex-start">Home</Slot><Slot $w={30} $j="flex-start">Contact</Slot>
          <Spacer $w={132.5} /><DateText>Date 22-09-2019 Time 16:47:56</DateText><Spacer />
          <Ico w={8} h={7} f="#777"><path d="M0 2.5H3.5V.5L6.5 3.5L3.5 6.5V4.5H0Z" /><path d="M6 .5C8 1 8 6 6 6.5" stroke="#999" strokeWidth=".8" fill="none" /></Ico>
          <Spacer $w={15} /><Ico w={8} h={7} f="#555"><path d="M0 0h3.5v3h-3.5zM4.3 0h3.5v3h-3.5zM0 3.7h3.5v3h-3.5zM4.3 3.7h3.5v3h-3.5z" /></Ico><Spacer $w={13} />
        </TopNav>
        <Heading>Dashboard</Heading>
        <Cards>
          <SwitchCard title="Switch Control 1" rows={[[0, false], [1, false], [2, true], [3, true]]} />
          <SwitchCard title="Switch Control 2" rows={[[4, true], [5, false], [6, true], [7, false]]} />
        </Cards>
      </Main>
      <WebScroll><Tri d="up" c="#888" w={5} /><WebThumb /></WebScroll>
    </AppBody>
    {knobs.map(([x, y]) => <Knob key={x + '/' + y} $x={x} $y={y} />)}
  </Picture>
);

const Worksheet = () => (
  <SheetArea>
    <Sheet>
      <HeaderRow><Corner><Ico w={11} h={10} f="#777"><path d="M11 0V10H0Z" /></Ico></Corner>{cols.map((c, i) => <ColHead key={i}>{c}</ColHead>)}</HeaderRow>
      {rowNums.map(n => <Row key={n}><RowHead>{n > 25 ? '' : n}</RowHead>{cols.map((_, i) => <Cell key={i} />)}</Row>)}
      <RotateHandle><Ico w={20} h={30} s="#8f8f8f" sw={1.5}><path d="M10 7V26" strokeWidth="1" /><path d="M2.5 0C3 5 6 8 10 8S15 6 16.5 3.5M5 0C6 3.5 8 5.3 10 5.3S12.5 4.5 13.5 2.5M12.5 0L16.5 4L20 0" strokeWidth="1.3" /></Ico></RotateHandle>
      <EmbeddedPicture />
    </Sheet>
    <VScroll><ScrollButton><Tri d="up" c="#aaa" /></ScrollButton><VThumb /><ScrollButton><Tri c="#999" /></ScrollButton></VScroll>
  </SheetArea>
);

const Bottom = () => (
  <>
    <SheetBar>
      <Spacer $w={15} /><Slot $w={24}><Tri d="left" c="#999" w={7} /></Slot><Slot $w={24}><Tri d="right" c="#999" w={7} /></Slot>
      <Spacer $w={26} /><VRule /><Slot $w={45}><Text $s={12} $ls={-0.3}>Flow</Text></Slot><Spacer $w={1} />
      <ActiveSheet><Text $s={12} $b={700} $c="#217346" $ls={-0.45}>Page Layout</Text></ActiveSheet>
      <Slot $w={73}><Ico w={15} h={15} s="#e5e5e5"><circle cx="7.5" cy="7.5" r="6.7" /><path d="M7.5 4V11M4 7.5H11" strokeWidth="1.8" /></Ico></Slot>
      <Spacer />
      <Slot $w={30}><Ico w={3} h={10} f="#ddd"><path d="M.5 0h2v2h-2zM.5 4h2v2h-2zM.5 8h2v2h-2z" /></Ico></Slot>
      <HScroll><ScrollButton><Tri d="left" c="#999" /></ScrollButton><HThumb /><ScrollButton><Tri d="right" c="#aaa" /></ScrollButton></HScroll>
      <Spacer $w={19} />
    </SheetBar>
    <StatusBar>
      <Spacer $w={7} /><Text $s={10} $b={600} $ls={-0.3}>Ready</Text><Spacer />
      <ViewButton $w={36} $on><Ico w={12} h={12} s="#eee"><path d="M.5 .5H11.5V11.5H.5ZM.5 4H11.5M.5 8H11.5M4 .5V11.5M8 .5V11.5" /></Ico></ViewButton>
      <ViewButton $w={36}><Ico w={12} h={12} s="#ddd"><path d="M.5 .5H11.5V11.5H.5ZM3 2.5H9V9.5H3ZM4 4.5H8M4 6H8M4 7.5H8" /></Ico></ViewButton>
      <ViewButton $w={34}><Ico w={12} h={12}><path d="M.5 .5H12V11.5H.5Z" stroke="#aaa" /><path d="M.5 .5H3.7V7H.5ZM4.7 .5H8V7H4.7Z" fill="#eee" /></Ico></ViewButton>
      <Slot $w={18}><Ico w={7} h={1} s="#bbb"><path d="M0 .5H7" /></Ico></Slot>
      <ZoomTrack><ZoomThumb /></ZoomTrack>
      <Slot $w={16}><Ico w={7} h={7} s="#bbb"><path d="M0 3.5H7M3.5 0V7" /></Ico></Slot>
      <Slot $w={38}><Text $s={10} $b={600} $ls={-0.5}>100%</Text></Slot>
    </StatusBar>
  </>
);

const taskIcons = [
  [<Ico w={21} h={20}><defs><linearGradient id="win" x2="1" y2="1"><stop stopColor="#82e3ff" /><stop offset="1" stopColor="#1aa3f0" /></linearGradient></defs><path d="M0 0H10V9.5H0ZM11 0H21V9.5H11ZM0 10.5H10V20H0ZM11 10.5H21V20H11Z" fill="url(#win)" /></Ico>],
  [<Ico w={20} h={20}><circle cx="9" cy="9" r="7.7" fill="#3b4664" stroke="#dadfe8" strokeWidth="2" /><path d="M14.5 14.5L18.5 18.5" stroke="#c5cddc" strokeWidth="2.7" strokeLinecap="round" /></Ico>],
  [<Ico w={22} h={19}><path d="M6 0H22V14H6Z" fill="#f0f0f2" /><path d="M0 5H16V18.5H0Z" fill="#777b80" opacity=".9" /><path d="M6 5H16V14H6Z" fill="#bcbec0" /></Ico>],
  [<Ico w={22} h={20}><path d="M0 1.5C0 .7 .5 0 1.5 0H8L10.5 3H22V19H0Z" fill="#e9a91c" /><path d="M0 5H22V19.5H0Z" fill="#ffc83d" /><path d="M4 19.5V15C4 13.5 5 13 6 13H16C17.5 13 18 14 18 15V19.5Z" fill="#1582d4" /></Ico>, 1],
  [<Ico w={22} h={22}><path d="M11 11L1.5 5.5A11 11 0 0 1 20.5 5.5Z" fill="#e64234" /><path d="M11 11L1.5 5.5A11 11 0 0 0 11 22L15.5 13.5Z" fill="#31a651" /><path d="M11 11L20.5 5.5A11 11 0 0 1 11 22Z" fill="#fbc51e" /><circle cx="11" cy="11" r="5.3" fill="#fff" /><circle cx="11" cy="11" r="4.2" fill="#4285f4" /></Ico>, 1],
  [<Ico w={20} h={20}><path d="M5 0H20V13H17L20 16H5Z" fill="#57a77a" /><path d="M0 4H14V16H5L0 20Z" fill="#128044" /></Ico>, 1],
  [<Ico w={22} h={21}><path d="M1 0H16V16H1Z" fill="#f8eded" /><path d="M3 3H12V12H3Z" stroke="#e24e2e" strokeWidth="2" strokeDasharray="2 1" /><path d="M10 9L19 14M15 8L13 17" stroke="#c8cbd0" strokeWidth="1.3" /><circle cx="19.5" cy="13.5" r="1.9" stroke="#1e87df" strokeWidth="1.4" /><circle cx="12.5" cy="18.5" r="1.9" stroke="#1e87df" strokeWidth="1.4" /></Ico>],
  [<Ico w={17} h={21}><path d="M0 1H17V20H0Z" fill="#49b5df" /><path d="M0 18.5H17V20.5H0Z" fill="#d87c2f" /><path d="M3 6H14M3 9H14M3 12H11" stroke="#17638f" strokeWidth="1.5" /><path d="M2 0V3M5 0V3M8 0V3M11 0V3M14 0V3" stroke="#ddd" /></Ico>],
  [<Ico w={16} h={21}><path d="M0 0H16V21H0Z" fill="#68788a" /><path d="M2 1.5H14V6H2Z" fill="#42b9ea" /><path d="M2 8h3v3h-3zM6.5 8h3v3h-3zM11 8h3v3h-3zM2 12.3h3v3h-3zM6.5 12.3h3v3h-3zM2 16.5h3v3h-3zM6.5 16.5h3v3h-3z" fill="#d6d9de" /><path d="M11 12.3H14V19.5H11Z" fill="#13457e" /></Ico>],
  [<Ico w={22} h={21}><path d="M16 0L22 3V18L16 21L7 12.5L2.5 16L0 14.5V6.5L2.5 5L7 8.5Z" fill="#9d6ad8" /><path d="M16 6V15L10 10.5Z" fill="#1b1e4c" /><path d="M2 8V13L5 10.5Z" fill="#1b1e4c" /><path d="M16 0L22 3V18L16 21Z" fill="#ba95ed" /></Ico>, 1],
  [<Ico w={19} h={20}><path d="M1 0H16V17H1Z" fill="#dde5ee" /><path d="M1 0H16V3.5H1Z" fill="#89a9cb" /><path d="M1 7H16M1 11H16M7 3V17" stroke="#8aa6c8" /><circle cx="13" cy="14" r="5.5" fill="#2b9d25" /><path d="M11.5 11.3V16.7L16 14Z" fill="#fff" /></Ico>],
  [<Ico w={21} h={21}><circle cx="10.5" cy="10.5" r="10.5" fill="#fff" /><g strokeWidth="2.3" strokeLinecap="round"><path d="M8.5 4.7V8.5M4.5 8.5H8" stroke="#36c5f0" /><path d="M12.3 4.7V8.5M16.5 8.5H13" stroke="#2eb67d" /><path d="M12.3 12.5V16.3M13 12.5H16.5" stroke="#ecb22e" /><path d="M8.5 12.5V16.3M8 12.5H4.5" stroke="#e01e5a" /></g></Ico>],
  [<Ico w={20} h={20}><circle cx="10" cy="10" r="9.3" fill="#168bd2" stroke="#67b8e6" strokeWidth="1" /><path d="M7 3V8C7 10.5 8.8 10.5 8.8 12V19H11.2V12C11.2 10.5 13 10.5 13 8V3M10 3V9" fill="#eaf5fb" stroke="#eaf5fb" strokeWidth=".6" /><path d="M8.5 3V8M11.5 3V8" stroke="#168bd2" strokeWidth=".8" /></Ico>, 1],
  [<Ico w={20} h={19}><path d="M0 1H20V18.5H0Z" fill="#eceef0" /><path d="M8 1L10 7L4 16L1 15V9Z" fill="#16983d" /><path d="M8 1C14 3 18 10 17 14L9 17Z" fill="#e6322b" /><path d="M8 1L9 17L5 14Z" fill="#fff" /></Ico>],
  [<Ico w={22} h={22}><circle cx="11" cy="11" r="10.8" fill="#0b5cff" /><path d="M6 6.2H15.5L7 15.8H16.2" stroke="#fff" strokeWidth="3" /></Ico>, 1],
  [<Ico w={20} h={21}><path d="M0 1L17 0L18 12L3 14Z" fill="#d1d5df" /><path d="M2 2.5L15.5 1.7L16 10.5L4 12Z" fill="#1d36c2" /><path d="M9 2L15.5 1.7L15.7 7Z" fill="#5f87ed" /><path d="M3 17L13 15L14 18L5 20Z" fill="#b9bdc6" /><circle cx="15" cy="15.5" r="4.5" fill="#d9ddd8" /><path d="M12.5 17.5L17.5 13.5" stroke="#3ea63e" strokeWidth="1.5" /></Ico>, 1],
  [<Ico w={21} h={20}><path d="M6 0H21V19.5H6Z" fill="#21a366" /><path d="M13 0H21V6H13Z" fill="#33c481" /><path d="M6 6H13V13H6Z" fill="#107c41" /><path d="M6 13H21V19.5H6Z" fill="#185c37" /><path d="M0 4.5H11V15.5H0Z" fill="#107c41" /><path d="M3 7L8 13M8 7L3 13" stroke="#fff" strokeWidth="1.5" /></Ico>, 2],
  [<Ico w={22} h={20}><circle cx="12" cy="10" r="9.7" fill="#ed6c47" /><path d="M12 .3A9.7 9.7 0 0 1 21.7 10H12Z" fill="#ff8f6b" /><path d="M3 13A9.7 9.7 0 0 0 21.7 10Z" fill="#d35230" /><path d="M0 5H11V16H0Z" fill="#c43e1c" /><path d="M4 13.5V7.5H6C9 7.5 9 11 6 11H4" stroke="#fff" strokeWidth="1.4" /></Ico>, 1],
];

const Tasks = () => (
  <TaskBar>
    <Spacer $w={1.5} />
    <Task><TaskTile><Ico w={24} h={26}><circle cx="10.5" cy="14" r="9" fill="#f5931e" /><path d="M8 18.5C8 15.5 11 15 12 16C13.5 13 18 14.5 18.5 17C21 17 21 20 19 20H10C8.7 20 8 19.5 8 18.5Z" fill="#d3e0f1" /><circle cx="16.5" cy="5.5" r="7" fill="#f69a9b" /><text x="13.8" y="9.2" fontSize="10" fill="#402020" fontFamily="Open Sans">1</text></Ico></TaskTile></Task>
    <Spacer $w={86.7} />
    {taskIcons.map(([icon, run], i) => <Task key={i}><TaskTile $on={run === 2}>{icon}</TaskTile>{run && <Dot $on={run === 2} />}</Task>)}
    <Spacer $w={15.5} />
    <Slot $w={20}><Ico w={9} h={6} s="#eee" sw={1.4}><path d="M.5 5L4.5 1L8.5 5" /></Ico></Slot>
    <Slot $w={36}><Ico w={10} h={14}><rect x="3" y="0" width="4" height="9" rx="2" fill="#6aa6cc" stroke="#8ecbee" strokeWidth=".7" /><path d="M.5 6C.5 12.3 9.5 12.3 9.5 6M5 11V14" stroke="#5ba8d4" /></Ico></Slot>
    <Slot $w={20}><Ico w={15} h={15} s="#e4e4e4"><path d="M9.5 1.5H.5V11.5H12.5V8M4 14.3H9M6.5 11.5V14.3M10.5 1H14.5V4.5C14.5 6.5 10.5 6.5 10.5 4.5ZM12.5 6V13.5" /></Ico></Slot>
    <Slot $w={20}><Ico w={13} h={12} s="#e4e4e4"><path d="M.5 4V8H3L6 11V1L3 4ZM8 4C9 5 9 7 8 8M9.7 2.3C11.7 4.3 11.7 7.7 9.7 9.7" /></Ico></Slot>
    <Spacer />
    <Clock><Text $s={10.8} $ls={-0.15}>10:23 AM</Text><Text $s={10.8} $ls={-0.2}>5/22/2023</Text></Clock>
    <Spacer $w={17} />
  </TaskBar>
);

export default function App() {
  return (
    <Screen>
      <Global />
      <Desktop>
        <Top />
        <RibbonPanel />
        <Formula />
        <Worksheet />
        <Bottom />
        <Tasks />
        <Watermark><WatermarkTitle>Activate Windows</WatermarkTitle><WatermarkNote>Go to Settings to activate Windows.</WatermarkNote></Watermark>
        <Pointer><Ico w={12} h={17} f="#fff" s="#222" sw={0.8}><path d="M.8 .8V14.5L4 11.5L6.3 16.3L8.8 15.2L6.5 10.5H10.5Z" /></Ico></Pointer>
      </Desktop>
    </Screen>
  );
}
